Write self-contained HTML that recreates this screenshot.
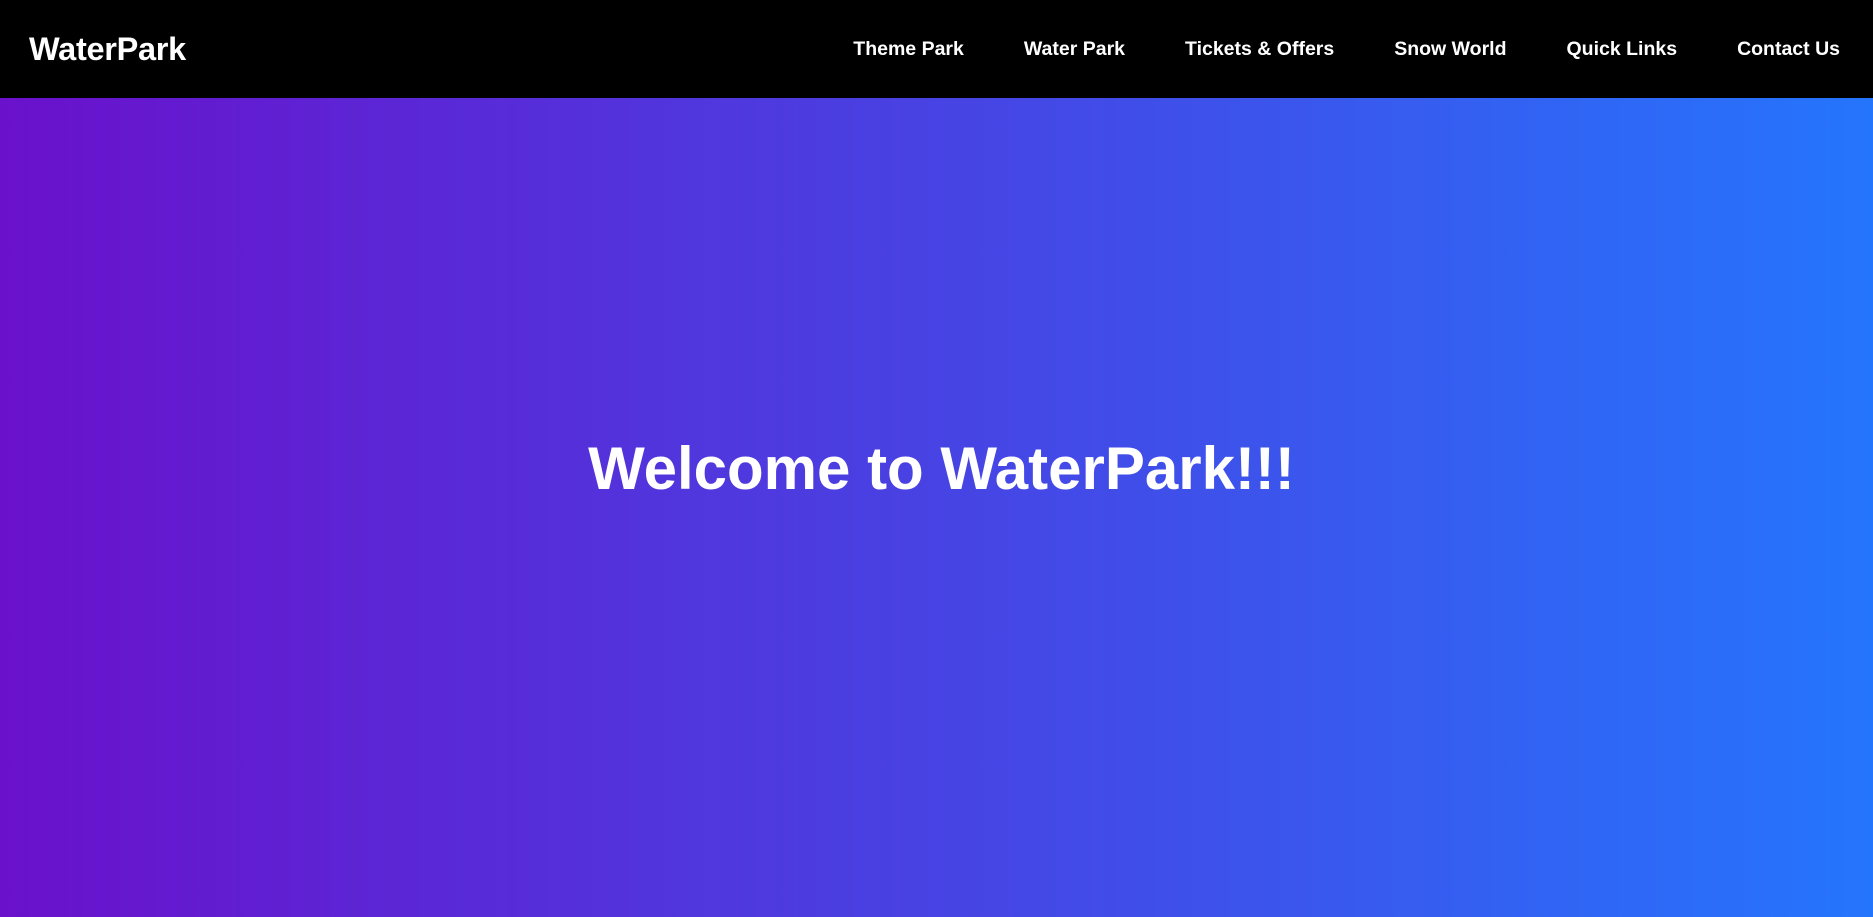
<!DOCTYPE html>
<html><head><meta charset="utf-8"><style>
*{margin:0;padding:0;box-sizing:border-box}
html,body{width:1873px;height:917px;overflow:hidden;font-family:"Liberation Sans",sans-serif}
nav{height:98px;background:#000;display:flex;align-items:center;justify-content:space-between;padding:0 33px 0 29px}
.logo{color:#fff;font-weight:bold;font-size:32.5px;letter-spacing:-0.3px}
ul{list-style:none;display:flex;gap:60px}
li{color:#fff;font-weight:bold;font-size:19.5px}
.hero{height:819px;background:linear-gradient(to right,#6a11cb,#2575fc);display:flex;align-items:center;justify-content:center}
h1{color:#fff;font-size:60px;font-weight:bold;margin-top:-78px;margin-left:10px}
</style></head><body>
<nav><div class="logo">WaterPark</div>
<ul><li>Theme Park</li><li>Water Park</li><li>Tickets &amp; Offers</li><li>Snow World</li><li>Quick Links</li><li>Contact Us</li></ul></nav>
<div class="hero"><h1>Welcome to WaterPark!!!</h1></div>
</body></html>
